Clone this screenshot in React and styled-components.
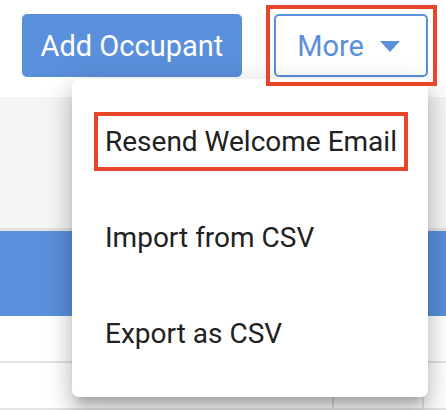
import React from 'react';
import styled, { createGlobalStyle } from 'styled-components';

const blue = '#5a8fdb';
const annot = '#e8462b';

const Global = createGlobalStyle`
  html, body {
    margin: 0;
    padding: 0;
    background: #fff;
    font-family: Roboto, "Liberation Sans", sans-serif;
  }
  body { width: 446px; height: 410px; overflow: hidden; }
`;

const Page = styled.div`
  display: flex;
  flex-direction: column;
  width: 446px;
  height: 410px;
  overflow: hidden;
`;

const Header = styled.div`
  display: flex;
  justify-content: flex-end;
  align-items: flex-start;
  gap: 32px;
  height: 106px;
  padding: 14px 18px 0 0;
  box-sizing: border-box;
  background: #fff;
  position: relative;
  z-index: 2;
`;

const Button = styled.button`
  height: 63px;
  box-sizing: border-box;
  font-family: Roboto, "Liberation Sans", sans-serif;
  font-size: 29px;
  border-radius: 5px;
  border: 2px solid ${blue};
  background: ${props => (props.primary ? blue : '#fff')};
  color: ${props => (props.primary ? '#fff' : blue)};
  padding: ${props => (props.primary ? '0 17px' : '0 26px 0 21px')};
  display: flex;
  align-items: center;
  gap: 16px;
  cursor: pointer;
`;

const MoreWrap = styled.div`
  position: relative;

  &::after {
    content: '';
    position: absolute;
    left: -8px;
    right: -9px;
    top: -9px;
    bottom: -9px;
    border: 4px solid ${annot};
    z-index: 5;
    pointer-events: none;
  }
`;

const Caret = styled.span`
  width: 0;
  height: 0;
  border-left: 10px solid transparent;
  border-right: 10px solid transparent;
  border-top: 11px solid ${blue};
  margin-top: 2px;
`;

const Menu = styled.div`
  position: absolute;
  top: 65px;
  right: 0;
  width: 356px;
  height: 318px;
  box-sizing: border-box;
  padding: 14px 0 16px;
  background: #fff;
  border-radius: 7px;
  box-shadow: 0 10px 10px -6px rgba(0, 0, 0, 0.2),
    0 16px 20px 2px rgba(0, 0, 0, 0.14),
    0 6px 28px 4px rgba(0, 0, 0, 0.12);
  z-index: 4;
  display: flex;
  flex-direction: column;
`;

const Item = styled.div`
  height: 96px;
  display: flex;
  align-items: center;
  padding-left: 33px;
  font-size: 28px;
  color: #212121;
`;

const Marked = styled.span`
  border: 4px solid ${annot};
  padding: 9px 7px;
  margin-left: -11px;
`;

const Toolbar = styled.div`
  height: 144px;
  background: #f5f5f5;
  border-bottom: 3px solid #e2e2e2;
  display: flex;
  align-items: center;
  justify-content: flex-end;
  padding-right: 19px;
`;

const Link = styled.span`
  color: ${blue};
  font-size: 28px;
`;

const TableHead = styled.div`
  height: 94px;
  background: ${blue};
`;

const Row = styled.div`
  height: 50px;
  border-bottom: 2px solid #e4e4e4;
  display: grid;
  grid-template-columns: 334px 90px 1fr;
`;

const Cell = styled.div`
  border-right: ${props => (props.divided ? '2px solid #e4e4e4' : 'none')};
`;

export default function App() {
  return (
    <Page>
      <Global />
      <Header>
        <Button primary>Add Occupant</Button>
        <MoreWrap>
          <Button>
            More <Caret />
          </Button>
          <Menu>
            <Item>
              <Marked>Resend Welcome Email</Marked>
            </Item>
            <Item>Import from CSV</Item>
            <Item>Export as CSV</Item>
          </Menu>
        </MoreWrap>
      </Header>
      <Toolbar>
        <Link>Filters</Link>
      </Toolbar>
      <TableHead />
      <Row />
      <Row>
        <Cell divided />
        <Cell divided />
        <Cell />
      </Row>
    </Page>
  );
}
